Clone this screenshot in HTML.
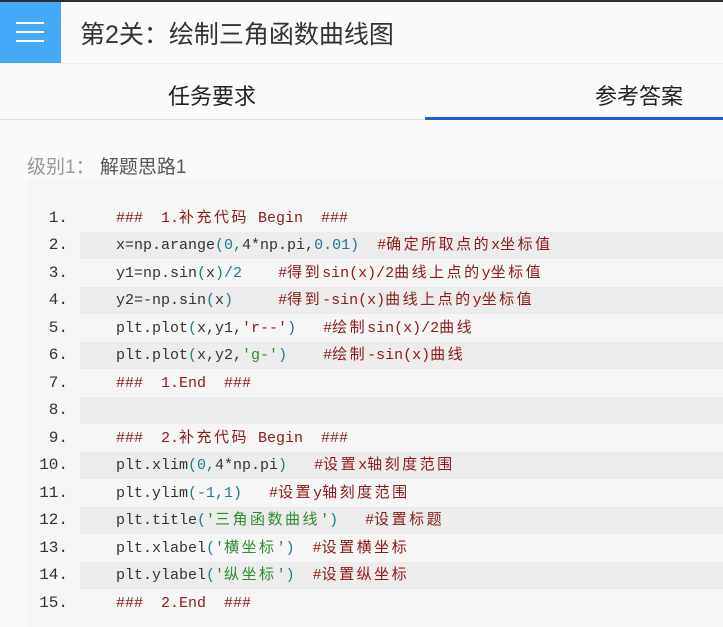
<!DOCTYPE html>
<html><head><meta charset="utf-8"><style>
body{margin:0;width:723px;height:627px;overflow:hidden;background:#fafafa;font-family:"Liberation Sans","Noto Sans CJK SC",sans-serif;position:relative}
.top{position:absolute;left:0;top:0;width:723px;height:2px;background:#2b2f36}
.hb{position:absolute;left:0;top:2px;width:61px;height:61px;background:#45a9f7}
.hb i{position:absolute;left:16px;width:28px;height:2px;background:#fff}
.title{position:absolute;left:80px;top:15px;font-size:25px;color:#333}
.hdrline{position:absolute;left:0;top:63px;width:723px;height:1px;background:#eee}
.tab{position:absolute;top:79px;font-size:22px;color:#222}
.div{position:absolute;left:0;top:119px;width:723px;height:1px;background:#ddd}
.ul{position:absolute;left:425px;top:117px;width:298px;height:3px;background:#1e5fd6}
.lbl{position:absolute;left:27px;top:152px;font-size:19px;color:#999}
.lbl b{font-weight:normal;color:#555}
.code{position:absolute;left:27px;top:180px;width:696px;height:447px;background:#f6f6f6}
.ln{position:absolute;left:0;width:696px;height:27px;font-family:"Liberation Mono","Noto Sans CJK SC",monospace;font-size:15px;line-height:27px;color:#333}
.ln .sh{position:absolute;left:53px;top:0;width:643px;height:27px;background:#ececec}
.ln .n{position:absolute;right:655px;color:#333;font-size:16px}
.ln .c{position:absolute;left:89px;white-space:pre}
.r{color:#8b1a1a}.t{color:#1f7a8c}.g{color:#2e8b2e}
.k{letter-spacing:2.5px}
</style></head><body>
<div class="top"></div>
<div class="hb"><i style="top:20px"></i><i style="top:29px"></i><i style="top:38px"></i></div>
<div class="title">第2关：绘制三角函数曲线图</div>
<div class="hdrline"></div>
<div class="tab" style="left:168px">任务要求</div>
<div class="tab" style="left:595px">参考答案</div>
<div class="div"></div><div class="ul"></div>
<div class="lbl">级别1： <b>解题思路1</b></div>
<div class="code">
<div class="ln" style="top:25px"><span class="n">1.</span><span class="c"><span class="r">###  1.<span class="k">补充代码</span> Begin  ###</span></span></div>
<div class="ln" style="top:52px"><span class="sh"></span><span class="n">2.</span><span class="c">x=np.arange<span class="t">(0,</span>4*np.pi,<span class="t">0.01)</span>  <span class="r">#<span class="k">确定所取点的</span>x<span class="k">坐标值</span></span></span></div>
<div class="ln" style="top:80px"><span class="n">3.</span><span class="c">y1=np.sin<span class="t">(</span>x<span class="t">)/2</span>    <span class="r">#<span class="k">得到</span>sin(x)/2<span class="k">曲线上点的</span>y<span class="k">坐标值</span></span></span></div>
<div class="ln" style="top:107px"><span class="sh"></span><span class="n">4.</span><span class="c">y2=-np.sin<span class="t">(</span>x<span class="t">)</span>     <span class="r">#<span class="k">得到</span>-sin(x)<span class="k">曲线上点的</span>y<span class="k">坐标值</span></span></span></div>
<div class="ln" style="top:135px"><span class="n">5.</span><span class="c">plt.plot<span class="t">(</span>x,y1,<span class="r">'r--'</span><span class="t">)</span>   <span class="r">#<span class="k">绘制</span>sin(x)/2<span class="k">曲线</span></span></span></div>
<div class="ln" style="top:162px"><span class="sh"></span><span class="n">6.</span><span class="c">plt.plot<span class="t">(</span>x,y2,<span class="g">'g-'</span><span class="t">)</span>    <span class="r">#<span class="k">绘制</span>-sin(x)<span class="k">曲线</span></span></span></div>
<div class="ln" style="top:190px"><span class="n">7.</span><span class="c"><span class="r">###  1.End  ###</span></span></div>
<div class="ln" style="top:217px"><span class="sh"></span><span class="n">8.</span><span class="c"></span></div>
<div class="ln" style="top:245px"><span class="n">9.</span><span class="c"><span class="r">###  2.<span class="k">补充代码</span> Begin  ###</span></span></div>
<div class="ln" style="top:272px"><span class="sh"></span><span class="n">10.</span><span class="c">plt.xlim<span class="t">(0,</span>4*np.pi<span class="t">)</span>   <span class="r">#<span class="k">设置</span>x<span class="k">轴刻度范围</span></span></span></div>
<div class="ln" style="top:300px"><span class="n">11.</span><span class="c">plt.ylim<span class="t">(-1,1)</span>   <span class="r">#<span class="k">设置</span>y<span class="k">轴刻度范围</span></span></span></div>
<div class="ln" style="top:327px"><span class="sh"></span><span class="n">12.</span><span class="c">plt.title<span class="t">(</span><span class="g">'<span class="k">三角函数曲线</span>'</span><span class="t">)</span>   <span class="r">#<span class="k">设置标题</span></span></span></div>
<div class="ln" style="top:355px"><span class="n">13.</span><span class="c">plt.xlabel<span class="t">(</span><span class="g">'<span class="k">横坐标</span>'</span><span class="t">)</span>  <span class="r">#<span class="k">设置横坐标</span></span></span></div>
<div class="ln" style="top:382px"><span class="sh"></span><span class="n">14.</span><span class="c">plt.ylabel<span class="t">(</span><span class="g">'<span class="k">纵坐标</span>'</span><span class="t">)</span>  <span class="r">#<span class="k">设置纵坐标</span></span></span></div>
<div class="ln" style="top:410px"><span class="n">15.</span><span class="c"><span class="r">###  2.End  ###</span></span></div>
</div>
</body></html>
